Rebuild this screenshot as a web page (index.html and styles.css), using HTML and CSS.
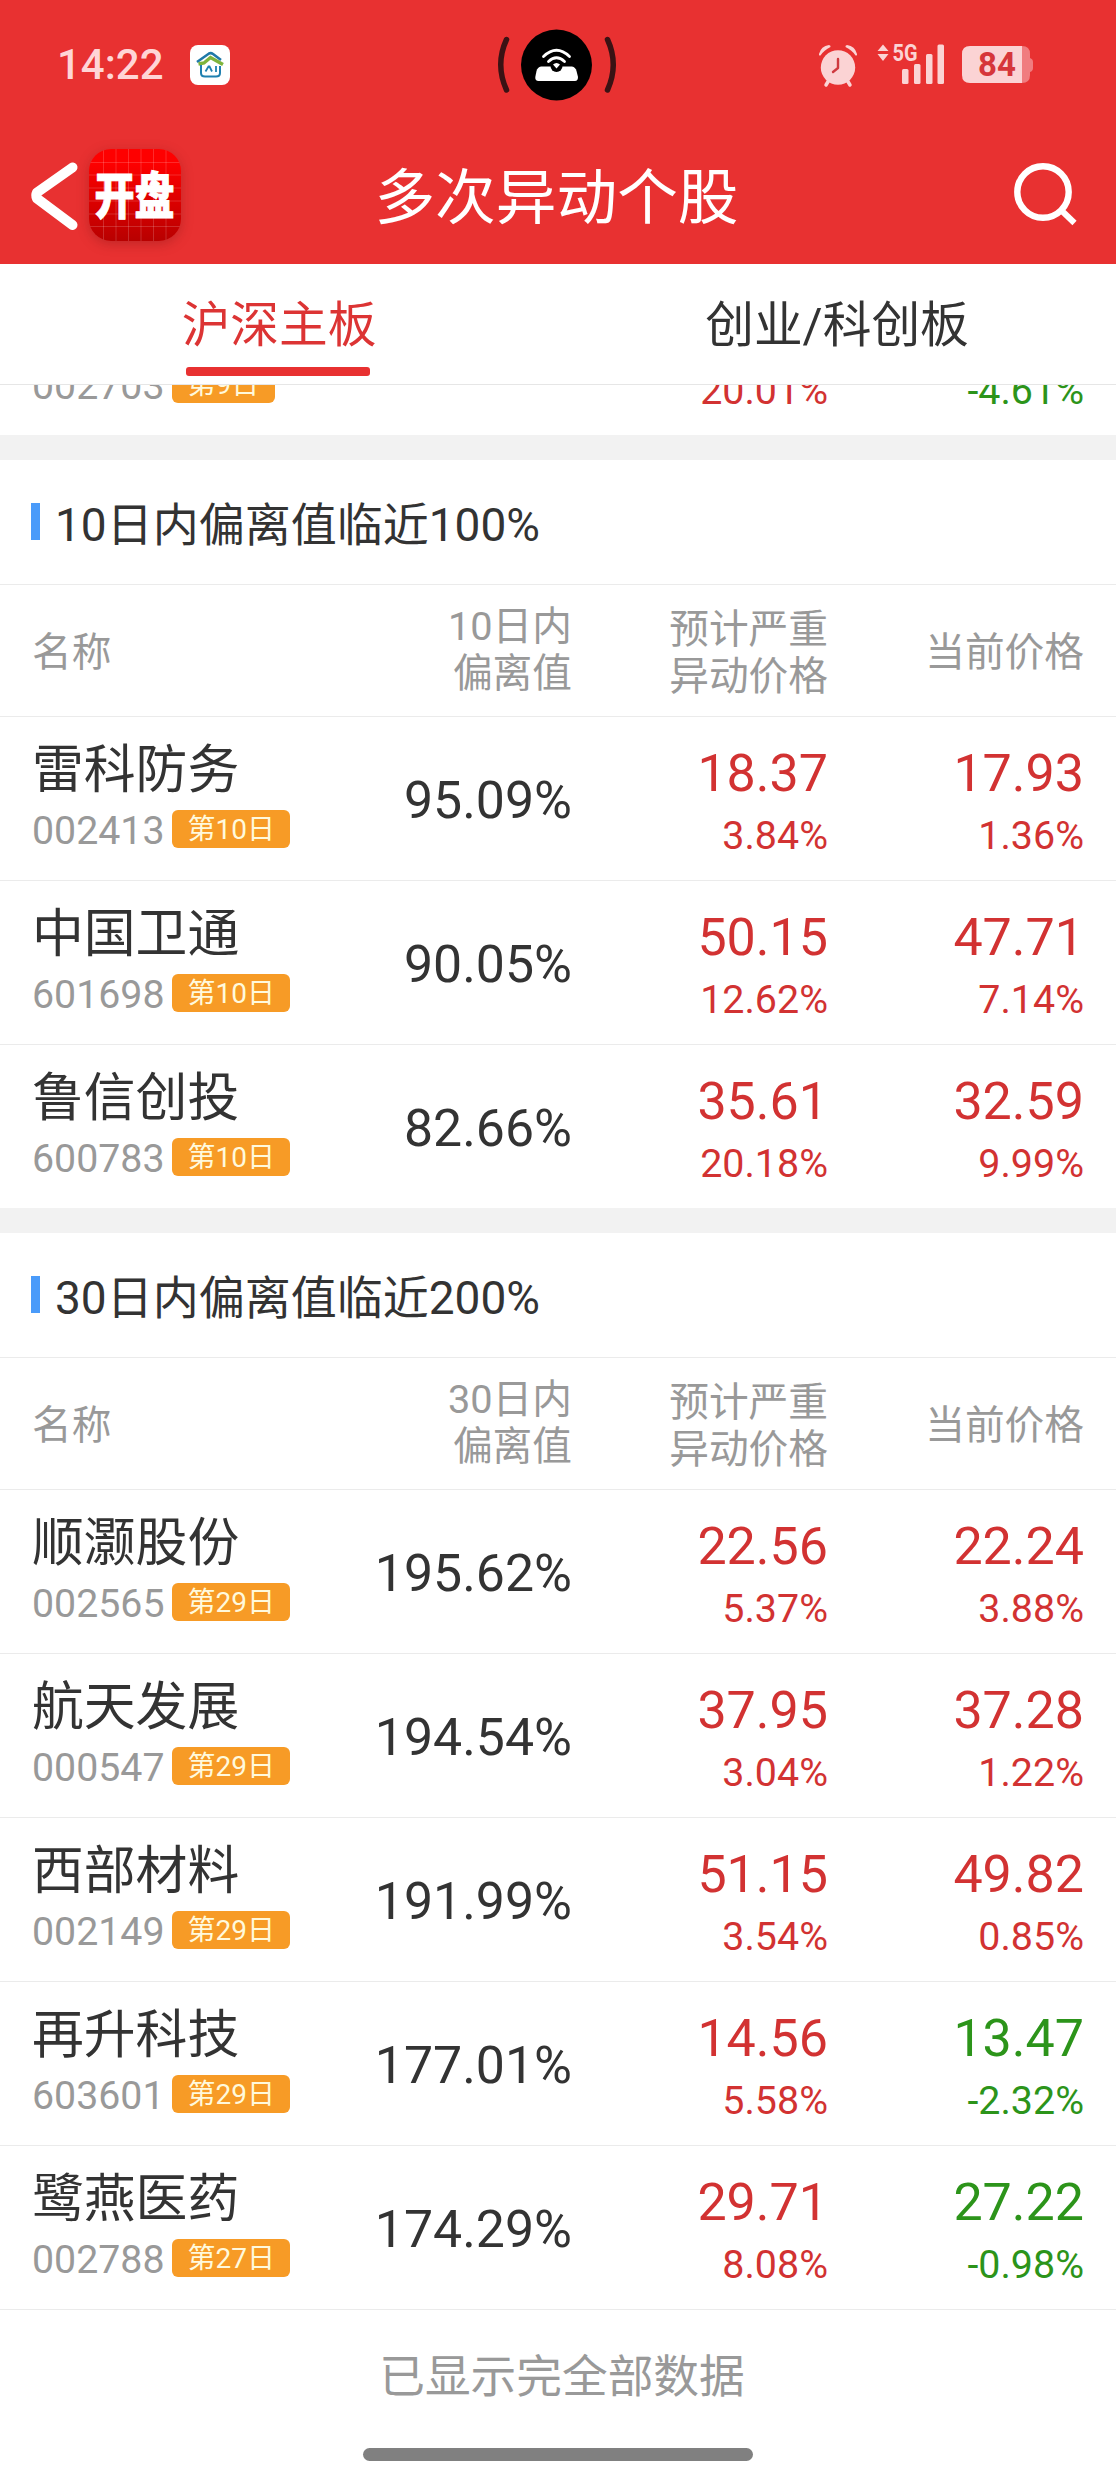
FILE: index.html
```html
<!DOCTYPE html>
<html lang="zh-CN">
<head>
  <meta charset="UTF-8">
  <meta name="viewport" content="width=device-width, initial-scale=1.0">
  <title>多次异动个股</title>
  <link rel="stylesheet" href="styles.css">
</head>
<body>

  <header class="top">
    <div class="status-bar">
      <div class="status-left">
        <span class="time">14:22</span>
        <svg class="ai-icon" viewBox="0 0 40 40">
          <rect width="40" height="40" rx="8" fill="#fff"/>
          <path d="M7 17L19 8.500Q21 7.500 23 9L31 15" fill="none" stroke="#1f78a8" stroke-width="2.600"/>
          <path d="M8.500 19L14 18L20.500 12.500L33 19.500" fill="none" stroke="#7fb43c" stroke-width="3.400"/>
          <path d="M11 20V28Q11 31.500 15 31.500H26Q30 31.500 30 28V21" fill="none" stroke="#2080b0" stroke-width="2"/>
          <path d="M15.500 26.500L18.500 21.500H19.500L22 26.500M26 21V27" fill="none" stroke="#2080b0" stroke-width="1.800"/>
        </svg>
      </div>
      <svg class="island" viewBox="0 0 120 72">
        <g fill="none" stroke="#3a1214" stroke-width="5.500" stroke-linecap="round">
          <path d="M10.500 10.500Q-1 35.500 10.500 61"/>
          <path d="M111.500 10.500Q123 35.500 111.500 61"/>
        </g>
        <circle cx="60.500" cy="36" r="35.500"/>
        <path d="M45 37.500H76Q79.500 38 80.500 42L82 48Q82 52 79 52H42.500Q39 52 39.300 48L40.500 42Q41.500 38 45 37.500Z" fill="#fff"/>
        <circle cx="60.500" cy="37" r="6" fill="#000"/>
        <path d="M57 35.500Q60.500 32.500 64 35.500L60.500 39.500Z" fill="#fff"/>
        <path d="M47.500 27.500Q60.500 15 73.500 27.500M52.500 32.500Q60.500 25 68.500 32.500" fill="none" stroke="#fff" stroke-width="2.800" stroke-linecap="round"/>
      </svg>
      <svg class="status-icons" viewBox="0 0 220 44">
        <g fill="#fbd3d4">
          <circle cx="21" cy="24.500" r="17.200"/>
          <path d="M2 11Q4 3 12 2Q14 2.500 13.500 4Q7 7 3.500 12.500Q1.500 13 2 11ZM40 11Q38 3 30 2Q28 2.500 28.500 4Q35 7 38.500 12.500Q40.500 13 40 11Z"/>
        </g>
        <path d="M12 37L9 42M30 37L33 42" stroke="#fbd3d4" stroke-width="3.500" stroke-linecap="round"/>
        <path d="M21 16V25L16 29" fill="none" stroke="#cf3a3f" stroke-width="2.400" stroke-linecap="round" stroke-linejoin="round"/>
        <path d="M60.500 8L66 1.500L71.500 8ZM60.500 11H71.500L66 18Z" fill="#fbd3d4"/>
        <text class="net" x="75.500" y="18" textLength="25" lengthAdjust="spacingAndGlyphs">5G</text>
        <g fill="#fbd3d4">
          <rect x="85" y="26" width="6.500" height="15" rx="1.500"/>
          <rect x="97" y="21" width="6.500" height="20" rx="1.500"/>
          <rect x="109" y="11" width="6.500" height="30" rx="1.500"/>
          <rect x="120.500" y="1.500" width="6.500" height="39.500" rx="1.500"/>
        </g>
        <path d="M205 3Q213 3 213 11V15Q216 16 216 19V25Q216 28 213 29V32Q213 40 205 40Z" fill="#f07c7f"/>
        <path d="M153 3H205V40H153Q145 40 145 32V11Q145 3 153 3Z" fill="#fbd3d4"/>
        <text class="battery" x="161" y="33">84</text>
      </svg>
    </div>

    <nav class="nav-bar">
      <div class="nav-left">
        <svg class="back" viewBox="0 0 48 70">
          <path d="M41.500 6.500L6 31.500Q4.500 34.500 6 37.500L41.500 64" fill="none" stroke="#fff" stroke-width="10" stroke-linecap="round" stroke-linejoin="round"/>
        </svg>
        <div class="logo">
          <svg viewBox="0 0 92 92">
            <path d="M14.500 0V92M27 0V92M39.500 0V92M52 0V92M64.500 0V92M77 0V92M0 13.500H92M0 26H92M0 39H92M0 52H92M0 65H92M0 77.500H92" stroke="#fff" stroke-opacity=".17" fill="none"/>
            <text class="logo-text" transform="translate(5.500 65) scale(1 1.240)">开盘</text>
          </svg>
        </div>
      </div>
      <h1>多次异动个股</h1>
      <svg class="search" viewBox="0 0 66 66">
        <circle cx="30" cy="30" r="25.700" fill="none" stroke="#fff" stroke-width="6.400"/>
        <path d="M48.500 48.500L61.500 61" stroke="#fff" stroke-width="6"/>
      </svg>
    </nav>
  </header>

  <div class="tabs">
    <a class="tab active">沪深主板</a>
    <a class="tab">创业/科创板</a>
  </div>

  <div class="scrolled" id="scrolled"></div>

  <main id="sections"></main>

  <p class="end">已显示完全部数据</p>
  <div class="home-bar"></div>

  <script>
    const lastRow = { name: "", code: "002703", day: 9, dev: "", est: "", estPct: "20.01%", price: "", pct: "-4.61%" };

    const sections = [
      { days: 10, limit: 100, rows: [
        { name: "雷科防务", code: "002413", day: 10, dev: "95.09%", est: "18.37", estPct: "3.84%", price: "17.93", pct: "1.36%" },
        { name: "中国卫通", code: "601698", day: 10, dev: "90.05%", est: "50.15", estPct: "12.62%", price: "47.71", pct: "7.14%" },
        { name: "鲁信创投", code: "600783", day: 10, dev: "82.66%", est: "35.61", estPct: "20.18%", price: "32.59", pct: "9.99%" }
      ]},
      { days: 30, limit: 200, rows: [
        { name: "顺灏股份", code: "002565", day: 29, dev: "195.62%", est: "22.56", estPct: "5.37%", price: "22.24", pct: "3.88%" },
        { name: "航天发展", code: "000547", day: 29, dev: "194.54%", est: "37.95", estPct: "3.04%", price: "37.28", pct: "1.22%" },
        { name: "西部材料", code: "002149", day: 29, dev: "191.99%", est: "51.15", estPct: "3.54%", price: "49.82", pct: "0.85%" },
        { name: "再升科技", code: "603601", day: 29, dev: "177.01%", est: "14.56", estPct: "5.58%", price: "13.47", pct: "-2.32%" },
        { name: "鹭燕医药", code: "002788", day: 27, dev: "174.29%", est: "29.71", estPct: "8.08%", price: "27.22", pct: "-0.98%" }
      ]}
    ];

    function rowHtml(r) {
      const color = r.pct.startsWith("-") ? "down" : "up";
      return `
        <div class="row">
          <div class="stock">
            <div class="name">${r.name}</div>
            <div class="meta"><span class="code">${r.code}</span><span class="badge">第${r.day}日</span></div>
          </div>
          <div class="deviation">${r.dev}</div>
          <div class="quote up"><div class="price">${r.est}</div><div class="percent">${r.estPct}</div></div>
          <div class="quote ${color}"><div class="price">${r.price}</div><div class="percent">${r.pct}</div></div>
        </div>`;
    }

    document.getElementById("scrolled").innerHTML = rowHtml(lastRow);

    document.getElementById("sections").innerHTML = sections.map(s => `
      <section class="section">
        <h2>${s.days}日内偏离值临近${s.limit}%</h2>
        <div class="row head">
          <div>名称</div>
          <div class="head-dev">${s.days}日内<br>偏离值</div>
          <div>预计严重<br>异动价格</div>
          <div>当前价格</div>
        </div>
        ${s.rows.map(rowHtml).join("")}
      </section>`).join("");
  </script>

</body>
</html>
```

FILE: styles.css
```css
* {
  box-sizing: border-box;
}

body {
  margin: 0;
  background: #fff;
  color: #333;
  font-family: Roboto, "Noto Sans CJK SC", sans-serif;
  height: 2484px;
  display: flex;
  flex-direction: column;
  overflow: hidden;
}

svg {
  display: block;
  overflow: visible;
}

.top {
  background: #e83131;
  height: 264px;
  flex: none;
}

.status-bar {
  height: 129px;
  display: grid;
  grid-template-columns: 1fr 120px 1fr;
  align-items: center;
  padding: 0 79px 0 57px;
}

.status-left {
  display: flex;
  align-items: center;
  gap: 26px;
}

.time {
  color: #ffd5d6;
  font-size: 42px;
  font-weight: 500;
}

.ai-icon {
  width: 40px;
  height: 40px;
}

.island {
  width: 120px;
  height: 72px;
  margin-left: 9px;
}

.status-icons {
  width: 220px;
  height: 44px;
  justify-self: end;
}

.net {
  font-size: 24px;
  font-weight: 700;
  fill: #fbd3d4;
}

.battery {
  font-size: 33px;
  font-weight: 700;
  fill: #d6363a;
}

.nav-bar {
  height: 134px;
  display: grid;
  grid-template-columns: 1fr auto 1fr;
  align-items: center;
  padding: 0 37px 0 31px;
}

.nav-left {
  display: flex;
  align-items: center;
  gap: 10px;
}

.back {
  width: 48px;
  height: 70px;
}

.logo {
  width: 92px;
  height: 92px;
  margin-top: -2px;
  border-radius: 22px;
  background: linear-gradient(#fe0000 15%, #b80000);
  box-shadow: 0 3px 12px rgba(120, 20, 20, 0.35);
  overflow: hidden;
}

.logo-text {
  font-size: 40px;
  font-weight: 900;
  fill: #fff;
  stroke: #fff;
  stroke-width: 0.8px;
}

.nav-bar h1 {
  margin: 0;
  padding: 5px 0 0 3px;
  color: #fff;
  font-size: 60.7px;
  font-weight: 400;
  line-height: 70px;
}

.search {
  width: 66px;
  height: 66px;
  margin-top: -2px;
  justify-self: end;
}

.tabs {
  height: 121px;
  flex: none;
  display: flex;
  border-bottom: 1px solid #e6e6e6;
}

.tab {
  flex: 1;
  display: flex;
  flex-direction: column;
  align-items: center;
  padding-top: 32px;
  font-size: 48.7px;
  line-height: 60px;
}

.tab.active {
  color: #dc3434;
}

.tab.active::after {
  content: "";
  width: 184px;
  height: 9px;
  margin: 11px 2px 0 0;
  border-radius: 3px;
  background: #e83131;
}

/* row that is cut off by the tabs */
.scrolled {
  height: 50px;
  flex: none;
  display: flex;
  flex-direction: column;
  justify-content: flex-end;
  overflow: hidden;
}

.section {
  border-top: 25px solid #f2f2f2;
}

.section h2 {
  display: flex;
  align-items: center;
  gap: 15px;
  height: 125px;
  margin: 0;
  padding: 0 0 2px 31px;
  border-bottom: 1px solid #ebebeb;
  font-size: 46px;
  font-weight: 400;
}

.section h2::before {
  content: "";
  width: 9px;
  height: 37px;
  background: #4a9bfa;
}

.row {
  display: grid;
  grid-template-columns: 300px 240px 256px 256px;
  height: 164px;
  flex: none;
  padding-left: 32px;
  border-bottom: 1px solid #ebebeb;
  text-align: right;
}

.scrolled .row,
.section:first-child .row:last-child {
  height: 163px;
  border-bottom: none;
}

.head {
  height: 132px;
  align-items: center;
  padding-top: 4px;
  color: #999;
  font-size: 39.7px;
  line-height: 47px;
}

.head > :first-child,
.stock {
  text-align: left;
}

.head-dev {
  padding-bottom: 5px;
}

.name {
  height: 60px;
  margin-top: 24px;
  font-size: 51.8px;
  line-height: 60px;
}

.meta {
  display: flex;
  align-items: center;
  height: 38px;
  margin-top: 9px;
}

.code {
  width: 140px;
  padding-top: 3px;
  color: #999;
  font-size: 39.3px;
}

.badge {
  height: 38px;
  padding: 0 15.5px;
  border-radius: 6px;
  background: #f79b26;
  color: #fff9dc;
  font-size: 28px;
  line-height: 39px;
}

.deviation {
  align-self: center;
  padding-top: 4px;
  font-size: 51.8px;
}

.price {
  height: 60px;
  margin-top: 27px;
  font-size: 52px;
  line-height: 60px;
}

.percent {
  margin-top: 9px;
  font-size: 39.4px;
  line-height: 46px;
}

.up {
  color: #d23232;
}

.down {
  color: #2c941a;
}

.end {
  margin: 38px 0 0 8px;
  color: #999;
  font-size: 45.7px;
  line-height: 60px;
  text-align: center;
}

.home-bar {
  width: 390px;
  height: 13px;
  margin: auto auto 23px;
  border-radius: 7px;
  background: #808080;
}
```
